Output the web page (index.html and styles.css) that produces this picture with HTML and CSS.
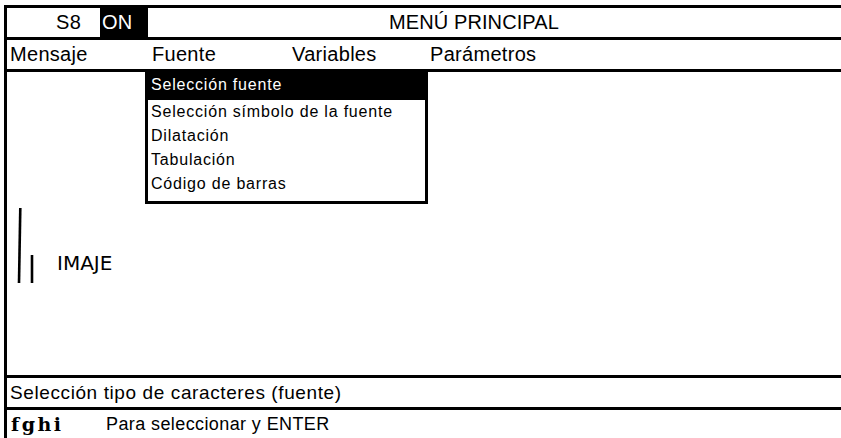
FILE: index.html
```html
<!DOCTYPE html>
<html lang="es">
<head>
<meta charset="utf-8">
<title>MENÚ PRINCIPAL</title>
<link rel="stylesheet" href="styles.css">
</head>
<body>
<div class="frame">
  <div class="hdr">
    <div class="hdr-id">S8</div>
    <div class="hdr-on">ON</div>
    <div class="hdr-title">MENÚ PRINCIPAL</div>
  </div>
  <div class="menubar">
    <div class="menu-item m1">Mensaje</div>
    <div class="menu-item m2">Fuente</div>
    <div class="menu-item m3">Variables</div>
    <div class="menu-item m4">Parámetros</div>
  </div>
  <div class="content">
    <div class="logo">
      <svg class="logo-mark" width="20" height="76" viewBox="0 0 20 76">
        <path d="M4.3 0 L3 75" stroke="#000" stroke-width="2.6" fill="none"/>
        <path d="M16 47 L16 75" stroke="#000" stroke-width="2.6" fill="none"/>
      </svg>
      <span class="logo-text">IMAJE</span>
    </div>
  </div>
  <div class="status">Selección tipo de caracteres (fuente)</div>
  <div class="foot">
    <span class="keys">fghi</span>
    <span class="foot-text">Para seleccionar y ENTER</span>
  </div>
  <ul class="dropdown">
    <li class="dd-item sel">Selección fuente</li>
    <li class="dd-item">Selección símbolo de la fuente</li>
    <li class="dd-item">Dilatación</li>
    <li class="dd-item">Tabulación</li>
    <li class="dd-item">Código de barras</li>
  </ul>
</div>
</body>
</html>
```
FILE: styles.css
```css
html, body {
  margin: 0;
  padding: 0;
  background: #fff;
}
body {
  width: 841px;
  height: 438px;
  overflow: hidden;
  font-family: "Liberation Sans", Arial, sans-serif;
  color: #000;
}
.frame {
  position: relative;
  margin: 5px 0 0 4px;
  border-left: 3px solid #000;
  height: 433px;
  display: flex;
  flex-direction: column;
}
.hdr {
  border-top: 3px solid #000;
  border-bottom: 3px solid #000;
  height: 29px;
  display: flex;
  align-items: stretch;
  font-size: 20px;
  letter-spacing: 0.3px;
}
.hdr-id {
  width: 93px;
  box-sizing: border-box;
  padding-left: 49px;
  display: flex;
  align-items: center;
}
.hdr-on {
  width: 48px;
  box-sizing: border-box;
  padding-left: 2px;
  background: #000;
  color: #fff;
  display: flex;
  align-items: center;
}
.hdr-title {
  margin-left: 241px;
  display: flex;
  align-items: center;
  letter-spacing: 0.1px;
}
.menubar {
  height: 29px;
  border-bottom: 3px solid #000;
  display: flex;
  align-items: center;
  font-size: 20px;
  letter-spacing: 0.3px;
}
.menu-item { box-sizing: border-box; }
.m1 { width: 145px; padding-left: 3px; }
.m2 { width: 140px; }
.m3 { width: 138px; }
.content {
  flex: 1;
}
.logo {
  display: flex;
  align-items: flex-end;
  margin: 136px 0 0 9px;
}
.logo-mark { display: block; }
.logo-text {
  margin-left: 21px;
  margin-bottom: 11px;
  font-family: "DejaVu Sans", Verdana, sans-serif;
  font-size: 20px;
  line-height: 20px;
}
.status {
  height: 29px;
  border-top: 3px solid #000;
  border-bottom: 3px solid #000;
  display: flex;
  align-items: center;
  padding-left: 3px;
  font-size: 19px;
  letter-spacing: 0.6px;
}
.foot {
  height: 28px;
  display: flex;
  align-items: center;
  padding-left: 4px;
}
.keys {
  font-family: "DejaVu Serif", "Liberation Serif", serif;
  font-weight: bold;
  font-size: 19px;
  letter-spacing: 2.5px;
  width: 95px;
}
.foot-text {
  font-size: 18px;
  letter-spacing: 0.4px;
}
.dropdown {
  position: absolute;
  left: 138px;
  top: 64px;
  width: 283px;
  height: 135px;
  box-sizing: border-box;
  margin: 0;
  padding: 0 0 3px 0;
  list-style: none;
  background: #fff;
  border: 3px solid #000;
  font-size: 16px;
  letter-spacing: 0.8px;
}
.dd-item {
  height: 24px;
  line-height: 24px;
  padding-left: 3px;
  white-space: nowrap;
}
.dd-item.sel {
  height: 27px;
  padding-top: 4px;
  line-height: 24px;
  margin: -3px -3px 0;
  padding-left: 6px;
  background: #000;
  color: #fff;
  box-sizing: content-box;
}
```
